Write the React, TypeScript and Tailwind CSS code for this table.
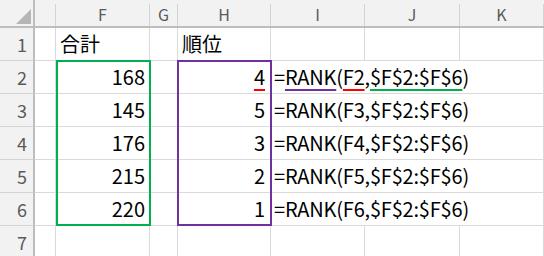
import React from 'react';

const font = { fontFamily: '"Noto Sans CJK JP", "Noto Sans", sans-serif' };

const cols = ['E', 'F', 'G', 'H', 'I', 'J', 'K'];
const labels = ['', 'F', 'G', 'H', 'I', 'J', 'K'];
const totals = [168, 145, 176, 215, 220];
const ranks = [4, 5, 3, 2, 1];

const grid = 'grid grid-cols-[35px_21px_94px_28px_93px_94px_95px_84px]';
const cell = 'border-r border-b border-[#dadada] h-[33px] flex items-end pb-[4px] leading-[24px] whitespace-nowrap';

const RowHead = ({ n }: { n: number }) => (
  <div className="h-[33px] bg-[#f2f2f2] border-r-2 border-b border-r-[#bdbdbd] border-b-[#d4d4d4] flex items-end justify-end pr-[6px] pb-[5px] text-[18px] leading-[22px] text-[#5a5a5a]">
    {n}
  </div>
);

const Formula = ({ row }: { row: number }) => {
  if (row === 2) {
    return (
      <span>
        =
        <span className="underline decoration-[#7030a0] decoration-2 underline-offset-[4px]">RANK</span>
        (
        <span className="underline decoration-[#ff0000] decoration-2 underline-offset-[4px]">F2</span>
        ,
        <span className="underline decoration-[#00b050] decoration-2 underline-offset-[4px]">$F$2:$F$6</span>
        )
      </span>
    );
  }
  return <span>=RANK(F{row},$F$2:$F$6)</span>;
};

export default function App() {
  return (
    <div className="relative w-[544px] h-[256px] overflow-hidden bg-white text-black" style={font}>
      {/* column headers */}
      <div className={grid}>
        <div className="h-[28px] bg-[#f2f2f2] border-r-2 border-b-2 border-[#bdbdbd] flex items-start justify-end pt-[9px] pr-[2px]">
          <svg width="15" height="15" viewBox="0 0 15 15">
            <polygon points="15,0 15,15 0,15" fill="#b5b5b5" />
          </svg>
        </div>
        {cols.map((c, i) => (
          <div key={c} className="h-[28px] bg-[#f2f2f2] border-b-2 border-[#bdbdbd] flex items-end">
            <div className="flex-1 text-center text-[16px] leading-[20px] pb-[2px] text-[#5a5a5a]">{labels[i]}</div>
            <div className="w-px h-[22px] bg-[#d4d4d4]" />
          </div>
        ))}
      </div>

      {/* row 1 */}
      <div className={grid}>
        <RowHead n={1} />
        <div className={cell} />
        <div className={`${cell} pl-[4px] text-[20px]`}>合計</div>
        <div className={cell} />
        <div className={`${cell} pl-[4px] text-[20px]`}>順位</div>
        <div className={cell} />
        <div className={cell} />
        <div className={cell} />
      </div>

      {/* rows 2-6 */}
      {totals.map((t, i) => (
        <div key={i} className={grid}>
          <RowHead n={i + 2} />
          <div className={cell} />
          <div className={`${cell} justify-end pr-[4px] text-[20px]`}>{t}</div>
          <div className={cell} />
          <div className={`${cell} justify-end pr-[5px] text-[20px]`}>
            {i === 0 ? (
              <span className="underline decoration-[#ff0000] decoration-2 underline-offset-[4px]">{ranks[i]}</span>
            ) : (
              ranks[i]
            )}
          </div>
          <div className={`${cell} col-span-3 pl-[3px] text-[20px] tracking-[-0.2px]`}>
            <Formula row={i + 2} />
          </div>
        </div>
      ))}

      {/* row 7 */}
      <div className={grid}>
        <RowHead n={7} />
        {cols.map((c) => (
          <div key={c} className={cell} />
        ))}
      </div>

      {/* range highlights */}
      <div className="absolute left-[56px] top-[60px] w-[95px] h-[166px] border-2 border-[#00b050] pointer-events-none" />
      <div className="absolute left-[177px] top-[60px] w-[95px] h-[166px] border-2 border-[#7030a0] pointer-events-none" />
    </div>
  );
}
